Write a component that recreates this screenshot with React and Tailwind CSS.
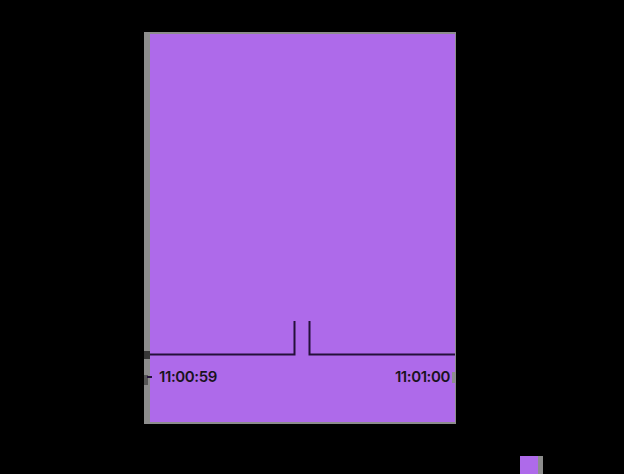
import React from "react";

const Chart = () => (
  <svg width="305" height="36" viewBox="0 0 305 36" className="block">
    <path
      d="M0 34.5 H144.5 V1 M159.5 1 V34.5 H305"
      fill="none"
      stroke="#24103a"
      strokeWidth="2"
    />
  </svg>
);

export default function App() {
  return (
    <div
      className="w-[624px] h-[474px] overflow-hidden bg-black flex flex-col"
      style={{ fontFamily: "Inter, 'Liberation Sans', sans-serif" }}
    >
      {/* panel */}
      <div className="ml-[144px] mt-[32px] flex w-[312px] h-[392px] bg-[#8d8d8d] pt-[2px] pb-[2px] pr-[1px]">
        {/* left strip marks */}
        <div className="w-[6px] flex flex-col">
          <div className="mt-[317px] h-[8px] bg-[#363636]" />
          <div className="mt-[16px] h-[10px] w-[4px] bg-[#555555]" />
        </div>
        <div className="flex-1 bg-[#ae6aea] flex flex-col pt-[286px]">
          <Chart />
          <div className="mt-[11px] flex items-center justify-between leading-[20px] text-[15px] font-semibold tracking-[-0.4px] text-[#1a1320]">
            <div className="flex items-center">
              <div className="-ml-[3px] w-[5px] h-[2px] bg-[#24103a]" />
              <span className="ml-[7px]">11:00:59</span>
            </div>
            <div className="flex items-center">
              <span>11:01:00</span>
              <div className="ml-[2px] w-[3px] h-[11px] bg-[#8d8d8d]" />
            </div>
          </div>
        </div>
      </div>
      {/* small swatch */}
      <div className="ml-[520px] mt-[32px] flex h-[18px]">
        <div className="w-[18px] bg-[#ae6aea]" />
        <div className="w-[5px] bg-[#8d8d8d]" />
      </div>
    </div>
  );
}
